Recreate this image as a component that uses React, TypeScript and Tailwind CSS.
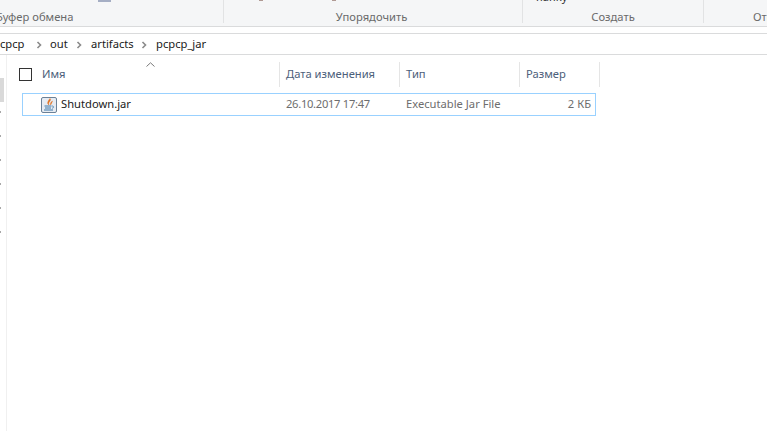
import React from 'react';

const Chevron = () => (
  <svg width="6" height="8" viewBox="0 0 6 8" className="shrink-0">
    <path d="M1.5 1 L4.5 4 L1.5 7" fill="none" stroke="#8a8a8a" strokeWidth="1.6" />
  </svg>
);

const JarIcon = () => (
  <svg width="16" height="16" viewBox="0 0 16 16" className="shrink-0">
    <rect x="0.5" y="0.5" width="15" height="15" rx="1.5" fill="#e6ebf2" stroke="#6b8197" />
    <path d="M9 1.5 C11 3.5 6.5 5 8 8 C5.5 6.5 7 4 9 1.5 Z M11.5 4 C10 5 9 6 9.6 8 C10.5 6.5 11 5.5 11.5 4 Z" fill="#e0701f" stroke="#e0701f" strokeWidth="0.4" />
    <path d="M3.5 9 H10.5 M4 11 H10 M3 13 H12" stroke="#3f78a8" strokeWidth="1" fill="none" />
    <path d="M11 9 C13.2 9 13.2 11 11 11.2" stroke="#3f78a8" strokeWidth="0.8" fill="none" />
  </svg>
);

const Column = ({ label, width }: { label: string; width: string }) => (
  <div className={`${width} h-[25px] flex items-center pl-[6px] border-r border-[#e5e5e5] text-[#4c607a]`}>{label}</div>
);

const App: React.FC = () => {
  return (
    <div className="w-[767px] h-[431px] overflow-hidden bg-white text-[11.2px] font-['Noto_Sans','Open_Sans',sans-serif] flex flex-col">
      <div className="h-[27px] shrink-0 bg-[#f5f6f7] border-b border-[#dadbdc] flex overflow-hidden text-[#6a6a6a] leading-none">
        <div className="w-[224px] h-[23px] shrink-0 relative border-r border-[#e2e3e4]">
          <div className="absolute left-[98px] top-0 w-[13px] h-[2px] bg-[#a5aec4]" />
          <div className="absolute left-[-4px] top-[11px] whitespace-nowrap">Буфер обмена</div>
        </div>
        <div className="w-[299px] h-[23px] shrink-0 relative border-r border-[#e2e3e4] flex items-end justify-center pr-[3px] pb-[1px]">
          <div className="absolute left-[35px] top-0 w-[4px] h-[1px] bg-[#b09a94]" />
          <div className="absolute left-[108px] top-0 w-[4px] h-[1px] bg-[#b09a94]" />
          Упорядочить
        </div>
        <div className="w-[181px] h-[23px] shrink-0 relative border-r border-[#e2e3e4] flex items-end justify-center pb-[1px]">
          <div className="absolute left-[13px] top-[-9px] whitespace-nowrap text-[#333]">папку</div>
          Создать
        </div>
        <div className="w-[144px] h-[23px] shrink-0 flex items-end justify-center pb-[1px]">Открыть</div>
      </div>
      <div className="h-[7px] shrink-0 border-b border-[#dadbdc]" />
      <div className="h-[21px] shrink-0 border-b border-[#dadbdc] flex items-center text-[#1a1a1a] overflow-hidden pt-[1px]">
        <span className="ml-[-7px] w-[43px] shrink-0">pcpcp</span>
        <Chevron />
        <span className="ml-[8px] w-[26px] shrink-0">out</span>
        <Chevron />
        <span className="ml-[9px] w-[50px] shrink-0">artifacts</span>
        <Chevron />
        <span className="ml-[9px]">pcpcp_jar</span>
      </div>
      <div className="flex-1 flex min-h-0">
        <div className="w-[7px] shrink-0 border-r border-[#f0f0f0] pt-[23px]">
          <div className="w-[4px] h-[24px] bg-[#d9d9d9]" />
          <div className="flex flex-col gap-[22px] mt-[9px]">
            {[0, 1, 2, 3, 4, 5].map((i) => (
              <div key={i} className="w-[1px] h-[2px] bg-[#a8a8a8]" />
            ))}
          </div>
        </div>
        <div className="flex-1 min-w-0 pt-[7px] pl-[12px]">
          <div className="relative flex items-center h-[25px]">
            <div className="absolute left-[127px] top-0">
              <svg width="9" height="5" viewBox="0 0 9 5">
                <path d="M0.5 4.5 L4.5 0.8 L8.5 4.5" fill="none" stroke="#7a7a7a" strokeWidth="1" />
              </svg>
            </div>
            <div className="w-[13px] h-[13px] shrink-0 border border-[#333]" />
            <div className="w-[248px] shrink-0 h-[25px] flex items-center pl-[10px] border-r border-[#e5e5e5] text-[#4c607a]">Имя</div>
            <Column label="Дата изменения" width="w-[120px]" />
            <Column label="Тип" width="w-[120px]" />
            <Column label="Размер" width="w-[80px]" />
          </div>
          <div className="mt-[6px] ml-[3px] w-[574px] h-[23px] border border-[#99d1ff] flex items-center text-[#6d6d6d]">
            <div className="ml-[18px]"><JarIcon /></div>
            <span className="ml-[4px] mt-[-1px] w-[225px] shrink-0 text-[#1a1a1a]">Shutdown.jar</span>
            <span className="mt-[-1px] w-[120px] shrink-0 tracking-[-0.3px]">26.10.2017 17:47</span>
            <span className="mt-[-1px] w-[100px] shrink-0 whitespace-nowrap">Executable Jar File</span>
            <span className="mt-[-1px] w-[85px] shrink-0 text-right">2 КБ</span>
          </div>
        </div>
      </div>
    </div>
  );
};

export default App;
